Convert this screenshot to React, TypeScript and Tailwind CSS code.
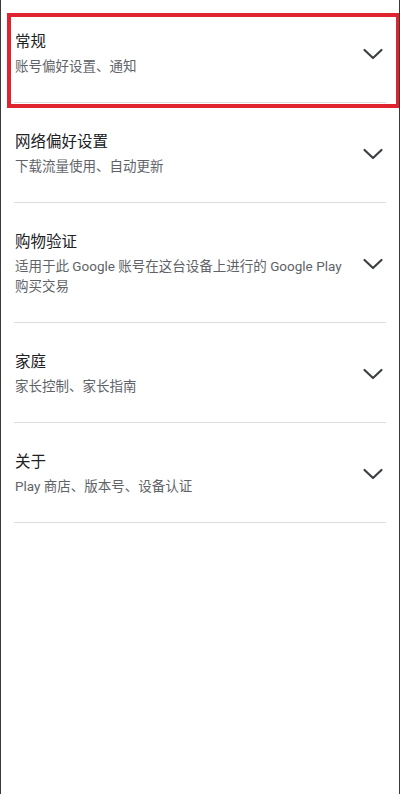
import React from "react";

const rows: { title: string; sub: string }[] = [
  { title: "常规", sub: "账号偏好设置、通知" },
  { title: "网络偏好设置", sub: "下载流量使用、自动更新" },
  { title: "购物验证", sub: "适用于此 Google 账号在这台设备上进行的 Google Play 购买交易" },
  { title: "家庭", sub: "家长控制、家长指南" },
  { title: "关于", sub: "Play 商店、版本号、设备认证" },
];

function Chevron() {
  return (
    <svg width="22" height="14" viewBox="0 0 22 14" className="shrink-0">
      <polyline points="2.5,3 11,11 19.5,3" fill="none" stroke="#3c4043" strokeWidth="2.2" strokeLinecap="round" strokeLinejoin="round" />
    </svg>
  );
}

export default function App() {
  return (
    <div
      className="relative w-[400px] h-[794px] bg-white border-l border-l-[#3a3a3a] border-r border-r-[#3a3a3a] overflow-hidden"
      style={{ fontFamily: 'Roboto, "Noto Sans CJK SC", "Noto Sans", sans-serif' }}
    >
      <div className="pt-[3px]">
        {rows.map((r, i) => (
          <div key={i} className="mx-[13px] border-b border-[#dadce0]">
            <div className="flex items-center pl-[1px] pt-[28px] pb-[26px]">
              <div className="flex-1 pr-[14px]">
                <div className="text-[15.5px] leading-[22px] text-[#202124]">{r.title}</div>
                <div className="mt-[3px] text-[13.5px] leading-[20px] text-[#5f6368]">{r.sub}</div>
              </div>
              <div className="mr-[2px]">
                <Chevron />
              </div>
            </div>
          </div>
        ))}
      </div>
      <div className="absolute left-[6px] top-[13px] w-[393px] h-[95px] border-[4px] border-[#e0242f]" />
    </div>
  );
}
